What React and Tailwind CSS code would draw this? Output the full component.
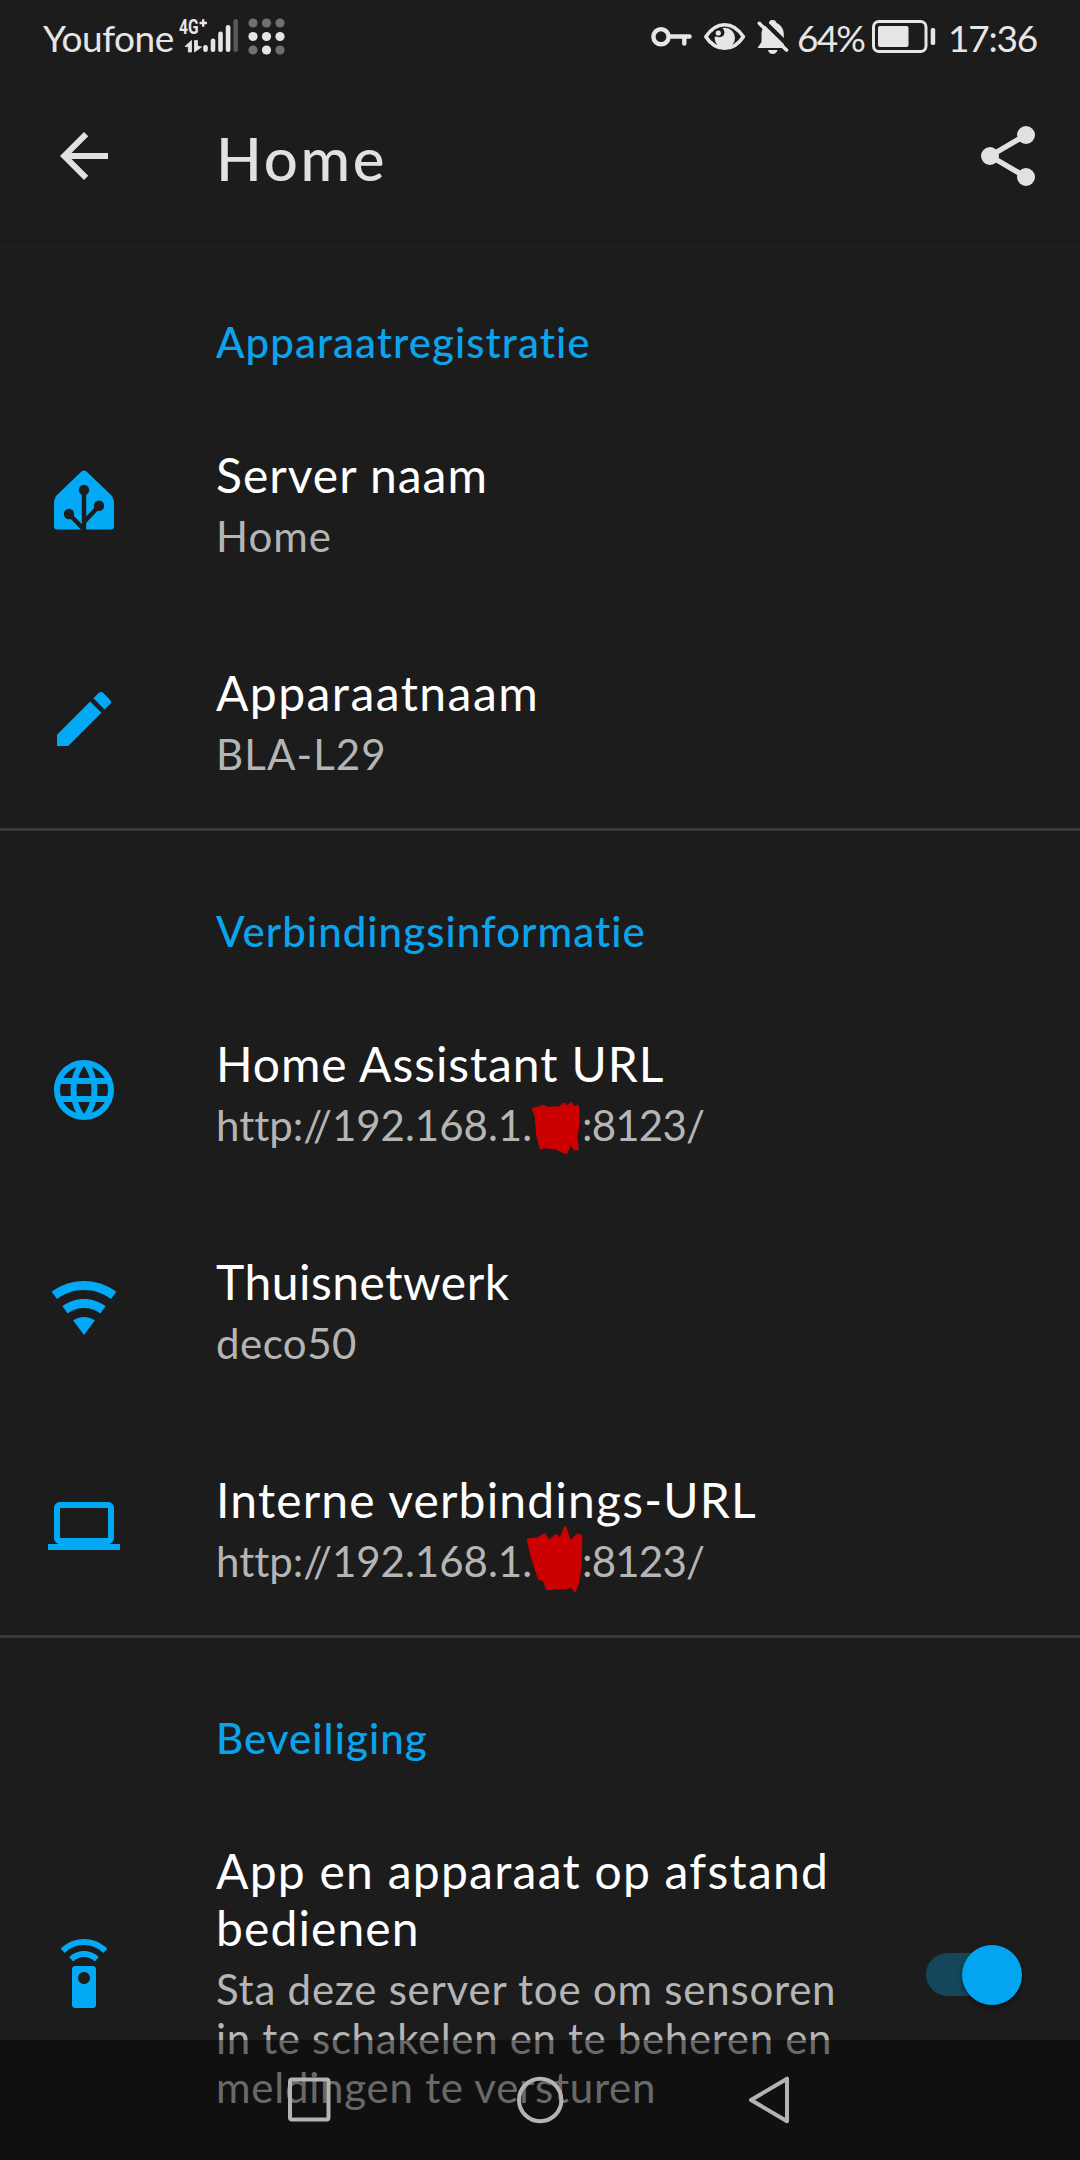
import React, { useState } from "react";

const ICONS = {
  pencil:
    "M20.71,7.04C21.1,6.65 21.1,6 20.71,5.63L18.37,3.29C18,2.9 17.35,2.9 16.96,3.29L15.12,5.12L18.87,8.87M3,17.25V21H6.75L17.81,9.93L14.06,6.18L3,17.25Z",
  web: "M16.36,14C16.44,13.34 16.5,12.68 16.5,12C16.5,11.32 16.44,10.66 16.36,10H19.74C19.9,10.64 20,11.31 20,12C20,12.69 19.9,13.36 19.74,14M14.59,19.56C15.19,18.45 15.65,17.25 15.97,16H18.92C17.96,17.65 16.43,18.93 14.59,19.56M14.34,14H9.66C9.56,13.34 9.5,12.68 9.5,12C9.5,11.32 9.56,10.65 9.66,10H14.34C14.43,10.65 14.5,11.32 14.5,12C14.5,12.68 14.43,13.34 14.34,14M12,19.96C11.17,18.76 10.5,17.43 10.09,16H13.91C13.5,17.43 12.83,18.76 12,19.96M8,8H5.08C6.03,6.34 7.57,5.06 9.4,4.44C8.8,5.55 8.35,6.75 8,8M5.08,16H8C8.35,17.25 8.8,18.45 9.4,19.56C7.57,18.93 6.03,17.65 5.08,16M4.26,14C4.1,13.36 4,12.69 4,12C4,11.31 4.1,10.64 4.26,10H7.64C7.56,10.66 7.5,11.32 7.5,12C7.5,12.68 7.56,13.34 7.64,14M12,4.03C12.83,5.23 13.5,6.57 13.91,8H10.09C10.5,6.57 11.17,5.23 12,4.03M18.92,8H15.97C15.65,6.75 15.19,5.55 14.59,4.44C16.43,5.07 17.96,6.34 18.92,8M12,2C6.47,2 2,6.5 2,12A10,10 0 0,0 12,22A10,10 0 0,0 22,12A10,10 0 0,0 12,2Z",
  wifi: "M12,21L15.6,16.2C14.6,15.45 13.35,15 12,15C10.65,15 9.4,15.45 8.4,16.2L12,21M12,3C7.95,3 4.21,4.34 1.2,6.6L3,9C5.5,7.12 8.62,6 12,6C15.38,6 18.5,7.12 21,9L22.8,6.6C19.79,4.34 16.05,3 12,3M12,9C9.3,9 6.81,9.89 4.8,11.4L6.6,13.8C8.1,12.67 9.97,12 12,12C14.03,12 15.9,12.67 17.4,13.8L19.2,11.4C17.19,9.89 14.7,9 12,9Z",
  laptop:
    "M20,18c1.1,0 1.99,-0.9 1.99,-2L22,6c0,-1.1 -0.9,-2 -2,-2H4c-1.1,0 -2,0.9 -2,2v10c0,1.1 0.9,2 2,2H0v2h24v-2h-4zM4,6h16v10H4V6z",
  remote:
    "M15 9H9c-.55 0-1 .45-1 1v12c0 .55.45 1 1 1h6c.55 0 1-.45 1-1V10c0-.55-.45-1-1-1zm-3 6c-1.1 0-2-.9-2-2s.9-2 2-2 2 .9 2 2-.9 2-2 2zM7.05 6.05l1.41 1.41C9.37 6.56 10.62 6 12 6s2.63.56 3.54 1.46l1.41-1.41C15.68 4.78 13.93 4 12 4s-3.68.78-4.95 2.05zM12 0C8.96 0 6.21 1.23 4.22 3.22l1.41 1.41C7.26 3.01 9.51 2 12 2s4.74 1.01 6.36 2.64l1.41-1.41C17.79 1.23 15.04 0 12 0z",
  back: "M20 11H7.83l5.59-5.59L12 4l-8 8 8 8 1.41-1.41L7.83 13H20v-2z",
};

function Icon({ name }) {
  return (
    <svg viewBox="0 0 24 24" className="h-[72px] w-[72px] shrink-0 fill-current">
      <path d={ICONS[name]} />
    </svg>
  );
}

function HomeIcon() {
  return (
    <svg viewBox="0 0 72 72" className="h-[72px] w-[72px] shrink-0">
      <path
        d="M33.5 6.6Q36 4.2 38.5 6.6L62.5 29.5Q66 33 66 38V61.5Q66 64.5 63 64.5H9Q6 64.5 6 61.5V38Q6 33 9.5 29.5Z"
        fill="#03a9f4"
      />
      <g stroke="#1c1c1c" strokeWidth="4.4" fill="none">
        <path d="M36 25V66M51 41L36.5 56.5M21 49L36 64.5" />
      </g>
      <g fill="#1c1c1c">
        <circle cx="36" cy="25" r="5.2" />
        <circle cx="51" cy="40.7" r="5.2" />
        <circle cx="21" cy="49" r="5.2" />
      </g>
    </svg>
  );
}

function SignalIcons() {
  return (
    <svg viewBox="174 0 116 72" className="h-[72px] w-[116px] shrink-0" fill="#e6e6e6">
      <text x="179" y="33.5" fontSize="19.5" fontWeight="700" fontFamily="Roboto, sans-serif" textLength="19.5" lengthAdjust="spacingAndGlyphs">
        4G
      </text>
      <path d="M199.5 23H207M203.2 19.3V26.8" stroke="#e6e6e6" strokeWidth="2.4" />
      <path d="M191.5 40.5V52H188.3V46.5H185Z" stroke="#e6e6e6" strokeWidth="0.8" />
      <path d="M194.5 40.5H197.5V46L201.5 47L194.5 52Z" stroke="#e6e6e6" strokeWidth="0.8" />
      <rect x="203.2" y="45" width="4.6" height="7" rx="2.2" />
      <rect x="210.7" y="38.5" width="4.6" height="13.5" rx="2.2" />
      <rect x="218.2" y="31.5" width="4.6" height="20.5" rx="2.2" />
      <rect x="225.8" y="25" width="4.6" height="27" rx="2.2" />
      <rect x="233.4" y="19" width="4.6" height="33" rx="2.2" fill="#575757" />
      <g fill="#707070">
        <circle cx="253" cy="23" r="4.6" />
        <circle cx="266.5" cy="23" r="4.6" />
        <circle cx="280" cy="23" r="4.6" />
        <circle cx="253" cy="50" r="4.6" />
        <circle cx="280" cy="50" r="4.6" />
      </g>
      <circle cx="253" cy="36.5" r="4.6" />
      <circle cx="266.5" cy="36.5" r="4.6" />
      <circle cx="280" cy="36.5" r="4.6" />
      <circle cx="266.5" cy="50" r="4.6" />
    </svg>
  );
}

function AlertIcons() {
  return (
    <svg viewBox="644 0 153 72" className="h-[72px] w-[153px] shrink-0" fill="#e6e6e6">
      {/* key */}
      <g fill="none" stroke="#e6e6e6" strokeWidth="4.4" strokeLinecap="round">
        <circle cx="661" cy="36.7" r="7.6" />
        <path d="M669 36.5H689.6M684.3 37V43.6" />
      </g>
      {/* eye */}
      <path
        d="M705.8 36.7C711 28.8 717 24.7 724.6 24.7S738.2 28.8 743.4 36.7C738.2 44.6 732.2 48.3 724.6 48.3S711 44.6 705.8 36.7Z"
        fill="none"
        stroke="#e6e6e6"
        strokeWidth="3.6"
        strokeLinejoin="round"
      />
      <circle cx="724.8" cy="38" r="10.2" />
      <path d="M714 30L722 27.5Q726 32 723.5 35.5Q720.5 38.5 716.5 36.5L713 37Z" fill="#1c1c1c" />
      <circle cx="718.3" cy="33" r="2.6" />
      {/* muted bell */}
      <path d="M772.5 20C769.5 20 769 22 769 23C764 25 761.5 29.5 761.5 34V42L757.5 48H787.5L783.8 42V34C783.8 29 781 25 776.5 23C776.5 22 775.5 20 772.5 20Z" />
      <path d="M768 50H777.5Q776.5 54 772.7 54Q769 54 768 50Z" />
      <path d="M761.5 19L791.5 48.5" stroke="#1c1c1c" strokeWidth="4.5" />
      <path d="M784 49.5L791 49.5L791 40L783.8 40Z" fill="#1c1c1c" />
      <path d="M759.3 23.3L786.5 50" stroke="#e6e6e6" strokeWidth="3.6" strokeLinecap="round" />
    </svg>
  );
}

function BatteryIcon() {
  return (
    <svg viewBox="867 0 81 72" className="h-[72px] w-[81px] shrink-0" fill="#e6e6e6">
      <rect x="873.5" y="21.5" width="52.5" height="30" rx="5.5" fill="none" stroke="#e6e6e6" strokeWidth="3" />
      <rect x="878" y="26" width="30.5" height="21" rx="2" />
      <rect x="930.7" y="28" width="4.5" height="17" rx="1.8" />
    </svg>
  );
}

function StatusBar() {
  return (
    <div className="flex h-[72px] items-center justify-between pl-[43px] text-[37px] leading-[44px] text-[#e6e6e6]">
      <div className="flex items-center">
        <span className="w-[131px] pt-[3px] tracking-[-0.5px]">Youfone</span>
        <SignalIcons />
      </div>
      <div className="flex items-center">
        <AlertIcons />
        <span className="w-[70px] pt-[3px] tracking-[-1.8px]">64%</span>
        <BatteryIcon />
        <span className="w-[132px] pt-[3px] tracking-[-1.2px]">17:36</span>
      </div>
    </div>
  );
}

function AppBar() {
  return (
    <header className="flex h-[170px] items-center border-b-2 border-[#191919] pr-9 pl-12 text-[#e1e1e1]">
      <Icon name="back" />
      <h1 className="ml-24 pt-1 text-[60px] leading-[72px] font-medium tracking-[2.7px]">Home</h1>
      <svg viewBox="0 0 24 24" className="ml-auto h-[72px] w-[72px] fill-current">
        <path d="M6 12L18 5M6 12L18 19" stroke="currentColor" strokeWidth="1.8" />
        <circle cx="18" cy="5" r="3" />
        <circle cx="6" cy="12" r="3" />
        <circle cx="18" cy="19" r="3" />
      </svg>
    </header>
  );
}

// Address with the last octet scribbled over
function MaskedUrl({ points, className }) {
  return (
    <span className="flex">
      <span className="w-[315px] [font-variant-ligatures:none]">http://192.168.1.</span>
      <span className="relative w-[51px]">
        <svg viewBox="0 0 270 240" className={`absolute left-[-21px] h-[80px] w-[90px] ${className}`}>
          <polygon points={points} fill="#cc0000" stroke="#cc0000" strokeWidth="9" strokeLinejoin="round" />
        </svg>
      </span>
      <span className="tracking-[-0.8px]">:8123/</span>
    </span>
  );
}

function Section({ title, tracking, children }) {
  return (
    <section className="border-b-[3px] border-[#393939]">
      <h2 className={`h-[150px] pt-[76px] pl-[216px] text-[42px] leading-[49px] font-medium text-[#0ba4ec] ${tracking}`}>{title}</h2>
      {children}
    </section>
  );
}

function Row({ icon, title, summary, action }) {
  return (
    <div className="flex items-center pb-[49px] pl-12 text-[#03a9f4]">
      <div className="pt-[49px]">{icon}</div>
      <div className="ml-24 flex-1 pt-[54px] whitespace-nowrap">
        <div className="text-[48px] leading-[57px] text-white">{title}</div>
        <div className="mt-[9px] text-[42px] leading-[49px] text-[#b5b5b5]">{summary}</div>
      </div>
      {action}
    </div>
  );
}

function Toggle({ on, onChange }) {
  return (
    <button
      type="button"
      role="switch"
      aria-checked={on}
      onClick={() => onChange(!on)}
      className="relative mt-[49px] mr-[58px] h-[60px] w-[96px]"
    >
      <span className="block h-[43px] w-[88px] rounded-full bg-[#15465c]" />
      <span className={`absolute top-0 h-[60px] w-[60px] rounded-full bg-[#03a4f0] shadow-[0_2px_5px_rgba(0,0,0,0.5)] ${on ? "right-0" : "left-0"}`} />
    </button>
  );
}

function NavBar() {
  return (
    <nav className="absolute inset-x-0 bottom-0 flex h-[120px] items-center justify-center bg-black/42">
      <svg viewBox="280 2040 520 120" className="h-[120px] w-[520px]" fill="none" stroke="#b4b4b4" strokeWidth="4" strokeLinejoin="round">
        <rect x="290" y="2079.5" width="38.5" height="40" rx="2" />
        <circle cx="540.2" cy="2100" r="21.2" />
        <path d="M751 2100L787 2078.7V2121.3Z" />
      </svg>
    </nav>
  );
}

export default function App() {
  const [remote, setRemote] = useState(true);

  return (
    <div className="relative h-[2160px] w-[1080px] overflow-hidden bg-[#1c1c1c] font-[Lato,sans-serif]">
      <StatusBar />
      <AppBar />

      <Section title="Apparaatregistratie" tracking="tracking-[1.05px]">
        <Row
          icon={<HomeIcon />}
          title={<span className="tracking-[1px]">Server naam</span>}
          summary={<span className="tracking-[1px]">Home</span>}
        />
        <Row
          icon={<Icon name="pencil" />}
          title={<span className="tracking-[1.45px]">Apparaatnaam</span>}
          summary={<span className="tracking-[1.1px]">BLA-L29</span>}
        />
      </Section>

      <Section title="Verbindingsinformatie" tracking="tracking-[1.05px]">
        <Row
          icon={<Icon name="web" />}
          title={<span className="tracking-[0.9px]">Home Assistant URL</span>}
          summary={
            <MaskedUrl
              className="top-[-10px]"
              points="70,55 100,46 110,52 150,50 161,39 167,50 184,38 188,50 202,46 205,90 198,140 202,173 195,174 181,155 168,185 140,172 105,167 93,171 83,130 78,72"
            />
          }
        />
        <Row
          icon={<Icon name="wifi" />}
          title={<span className="tracking-[0.5px]">Thuisnetwerk</span>}
          summary={<span className="tracking-[0.5px]">deco50</span>}
        />
        <Row
          icon={<Icon name="laptop" />}
          title={<span className="tracking-[1.18px]">Interne verbindings-URL</span>}
          summary={
            <MaskedUrl
              className="top-[-21px]"
              points="55,72 85,68 103,56 117,78 138,59 152,72 165,36 180,80 204,57 213,62 209,160 203,200 194,223 185,208 165,217 145,214 112,218 103,192 88,187 66,120"
            />
          }
        />
      </Section>

      <Section title="Beveiliging" tracking="tracking-[1.05px]">
        <Row
          icon={<Icon name="remote" />}
          title={
            <>
              <span className="block tracking-[1.25px]">App en apparaat op afstand</span>
              <span className="block tracking-[1.1px]">bedienen</span>
            </>
          }
          summary={
            <>
              <span className="block tracking-[0.77px]">Sta deze server toe om sensoren</span>
              <span className="block tracking-[0.65px]">in te schakelen en te beheren en</span>
              <span className="block tracking-[0.76px]">meldingen te versturen</span>
            </>
          }
          action={<Toggle on={remote} onChange={setRemote} />}
        />
      </Section>

      <NavBar />
    </div>
  );
}
